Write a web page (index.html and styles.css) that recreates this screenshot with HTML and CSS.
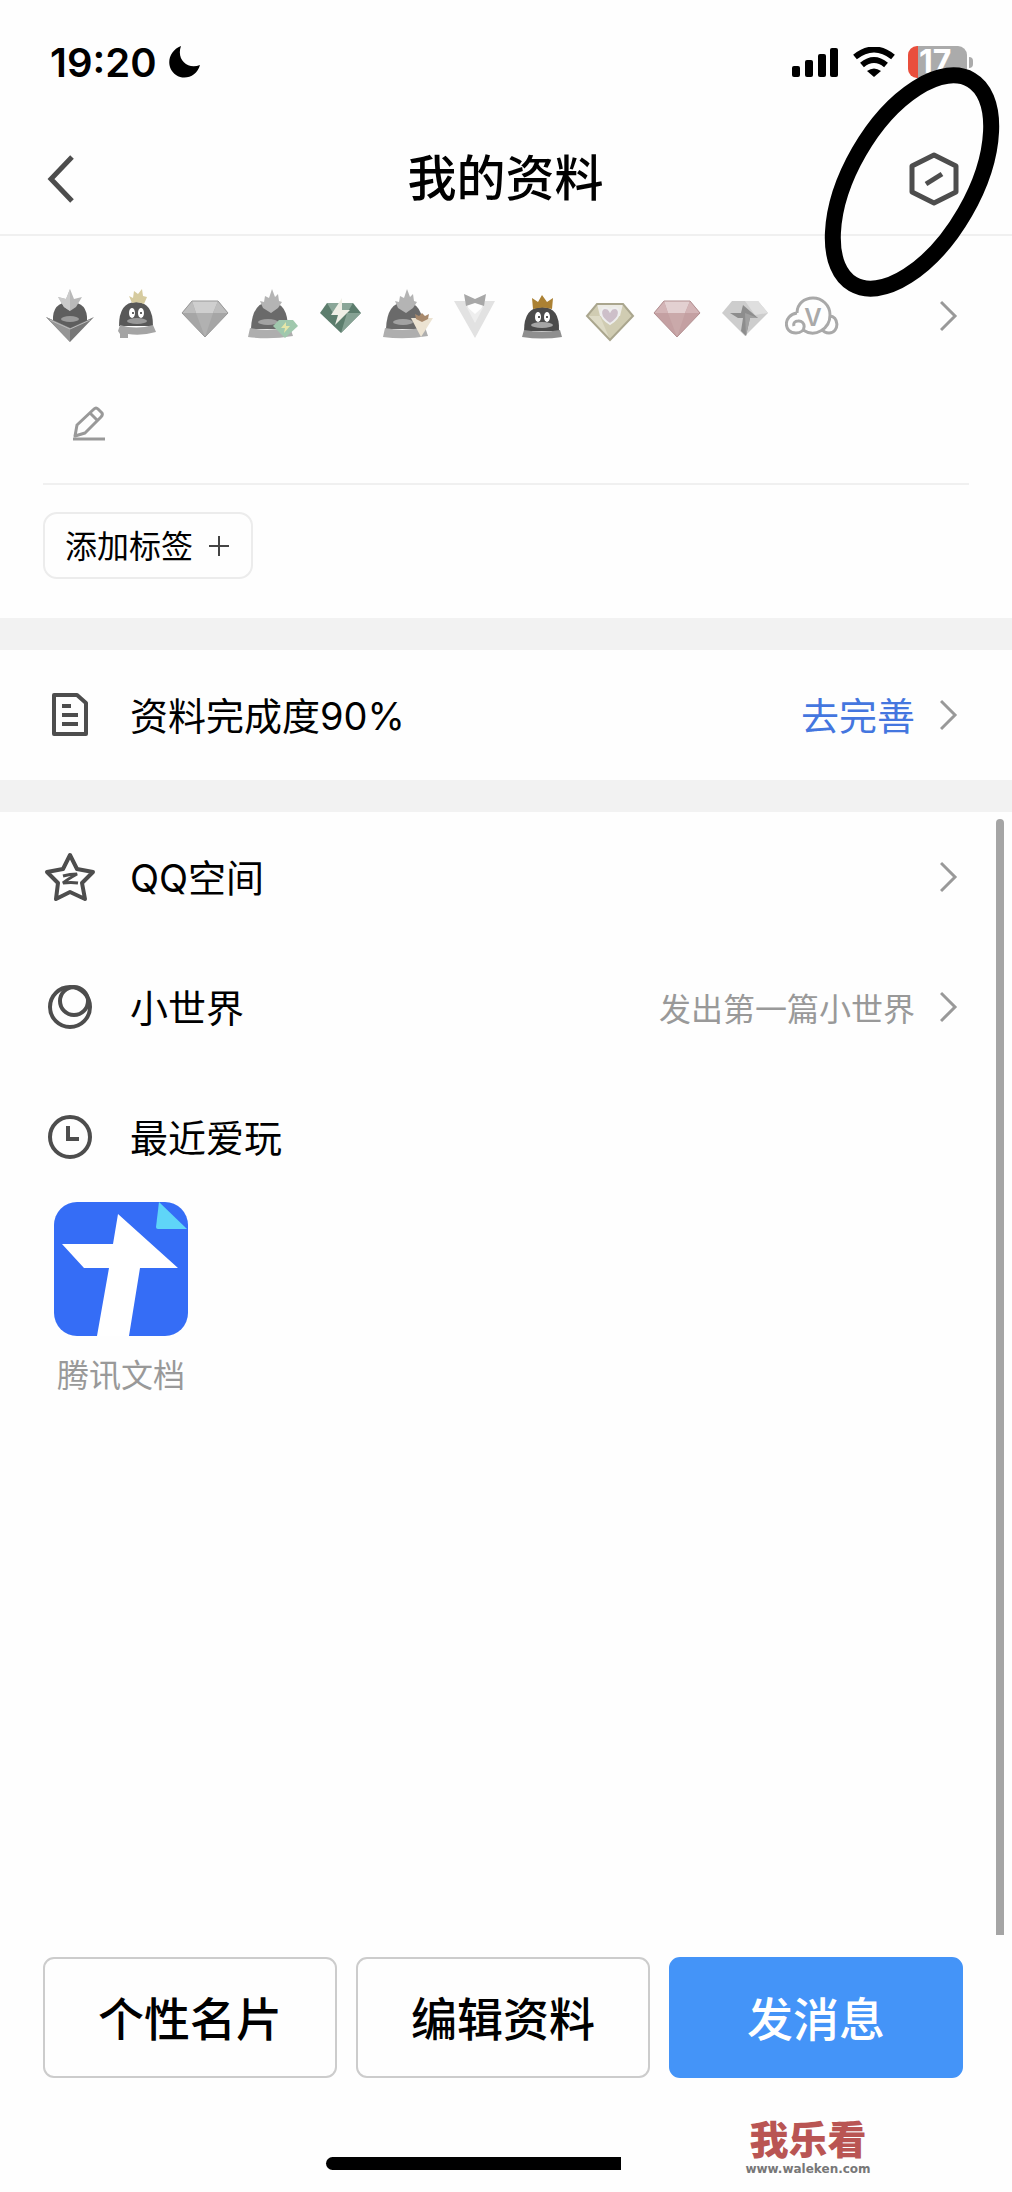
FILE: index.html
```html
<!DOCTYPE html>
<html lang="zh-CN">
<head>
    <meta charset="UTF-8">
    <meta name="viewport" content="width=device-width, initial-scale=1.0">
    <title>我的资料</title>
    <link rel="stylesheet" href="styles.css">
</head>
<body>
<svg class="defs" width="0" height="0" aria-hidden="true">
    <symbol id="arrow" viewBox="0 0 18 32"><path d="M1 2l14 14L1 30" fill="none" stroke="#999" stroke-width="3"/></symbol>
</svg>
<div class="page">
    <header class="header">
        <div class="status">
            <span class="time">19:20</span>
            <svg class="moon" width="32" height="32" viewBox="0 0 32 32"><path d="M12 0C-1 5-4 21 7 29c9 6 21 1 24-10C19 24 7 14 12 0z"/></svg>
            <svg class="signal" width="48" height="30" viewBox="0 0 48 30">
                <rect x="0" y="19" width="8" height="11" rx="2"/>
                <rect x="13" y="13" width="8" height="17" rx="2"/>
                <rect x="26" y="7" width="8" height="23" rx="2"/>
                <rect x="38" y="1" width="8" height="29" rx="2"/>
            </svg>
            <svg class="wifi" width="42" height="30" viewBox="0 0 42 30">
                <path d="M2 10q19-15 38 0M9 18q12-10 24 0" fill="none" stroke="#000" stroke-width="6"/>
                <path d="M14 24q7-5 14 0l-7 6z"/>
            </svg>
            <span class="battery">17</span>
        </div>
        <div class="nav">
            <button class="nav-btn back" type="button" aria-label="返回">
                <svg width="28" height="48" viewBox="0 0 28 48"><path d="M26 2L5 24l21 22" fill="none" stroke="#4d4d4d" stroke-width="5"/></svg>
            </button>
            <h1>我的资料</h1>
            <button class="nav-btn" type="button" aria-label="设置">
                <svg width="50" height="54" viewBox="0 0 50 54" fill="none" stroke="#4d4d4d" stroke-width="5">
                    <path d="M25 3l22 11v26L25 51 3 40V14z" stroke-linejoin="round"/>
                    <path d="M17 32l16-10"/>
                </svg>
            </button>
        </div>
        <svg class="mark" width="176" height="230" viewBox="0 0 176 230">
            <ellipse cx="88" cy="115" rx="61" ry="118" transform="rotate(30 88 115)" fill="none" stroke="#000" stroke-width="16"/>
        </svg>
    </header>

    <section class="info">
        <a class="badges" href="#" aria-label="特权图标">
            <span class="badge-list">
                <svg viewBox="0 0 54 54">
                    <path d="M10 32q-1-19 17-19t17 19l-17 10z" fill="#5e5e5e"/>
                    <ellipse cx="27" cy="30" rx="9" ry="3" fill="#9b9b9b"/>
                    <path d="M27 0l4 10 8-2-6 10-6 4-6-4-6-10 8 2z" fill="#b9b9b9"/>
                    <path d="M27 0v22l-6-4-6-10 8 2z" fill="#cbcbcb"/>
                    <path d="M3 28l24 11 24-11-24 25z" fill="#777"/>
                    <path d="M3 28l24 11v14z" fill="#959595"/>
                    <path d="M7 31l20 9 20-9" fill="none" stroke="#bbb"/>
                </svg>
                <svg viewBox="0 0 54 54">
                    <path d="M9 37q0-24 17-24t17 24z" fill="#585858"/>
                    <path d="M10 36q16 5 33 0l3 7q-14 4-28 2v4h-8v-4l-2-3z" fill="#a4a4a4"/>
                    <ellipse cx="27" cy="32" rx="10" ry="3" fill="#999"/>
                    <ellipse cx="22" cy="24" rx="3" ry="5" fill="#fff"/><ellipse cx="31" cy="24" rx="3" ry="5" fill="#fff"/>
                    <circle cx="23" cy="24" r="1" fill="#333"/><circle cx="31" cy="24" r="1" fill="#333"/>
                    <path d="M22 14l-3-7 4 2 1-7 4 3 4-5 1 7 4 1-3 7q-6-3-12-1z" fill="#d6cb9f"/>
                </svg>
                <svg viewBox="0 0 54 54">
                    <path d="M14 12h26l10 12-23 24L4 24z" fill="#a6a6a6"/>
                    <path d="M14 12h26l-5 12H18z" fill="#cfcfcf"/>
                    <path d="M14 12l4 12H4zM40 12l10 12H35z" fill="#bdbdbd"/>
                    <path d="M18 24h17l-8 24z" fill="#b1b1b1"/>
                    <path d="M14 12h26l10 12-23 24L4 24z" fill="none" stroke="#999"/>
                </svg>
                <svg viewBox="0 0 54 54">
                    <path d="M6 40q1-27 19-27t18 27z" fill="#6a6a6a"/>
                    <path d="M5 39q19 4 40-1l3 9q-23 4-45 1z" fill="#aeaeae"/>
                    <ellipse cx="23" cy="33" rx="10" ry="3" fill="#a2a2a2"/>
                    <path d="M18 19l-3-7 4 1 1-6 4 2 3-9 3 8 3-3 1 7 3 1-4 6-7 5z" fill="#b4b4b4"/>
                    <path d="M34 31h14l5 6-13 12-12-12z" fill="#a0c8ad"/>
                    <path d="M41 33l-5 6h4l-1 5 6-7h-4z" fill="#e5e6a8"/>
                </svg>
                <svg viewBox="0 0 54 54">
                    <path d="M14 14h26l8 10-20 20L7 24z" fill="#5c7d6d"/>
                    <path d="M14 14h26l-6 10H20z" fill="#8aa698"/>
                    <path d="M34 24h14L28 44z" fill="#86a294"/>
                    <path d="M29 9L18 26h7l-3 10 15-15h-8z" fill="#efefe6"/>
                </svg>
                <svg viewBox="0 0 54 54">
                    <path d="M6 40q1-27 19-27t18 27z" fill="#6a6a6a"/>
                    <path d="M5 39q19 4 40-1l3 9q-23 4-45 1z" fill="#aeaeae"/>
                    <ellipse cx="23" cy="33" rx="10" ry="3" fill="#a2a2a2"/>
                    <path d="M18 19l-3-7 4 1 1-6 4 2 3-9 3 8 3-3 1 7 3 1-4 6-7 5z" fill="#b4b4b4"/>
                    <path d="M31 29h22L41 48z" fill="#ece3d2"/>
                    <path d="M36 30l-1-5 4 2 3-3 3 3 4-2-1 5-6 3z" fill="#a8896c"/>
                </svg>
                <svg viewBox="0 0 54 54">
                    <path d="M6 12h11l10 21 10-21h10L27 49z" fill="#e2e2e2"/>
                    <path d="M18 17l9 17 9-17-9 8z" fill="#eee"/>
                    <path d="M16 5l11 5 11-5-2 12-9-3-9 3z" fill="#a8a8a8"/>
                </svg>
                <svg viewBox="0 0 54 54">
                    <path d="M9 42q0-24 18-24t17 24z" fill="#4b4b4b"/>
                    <path d="M9 41q18 3 36 0l2 7q-20 3-40 0z" fill="#8f8f8f"/>
                    <ellipse cx="27" cy="36" rx="11" ry="3" fill="#a5a5a5"/>
                    <ellipse cx="23" cy="28" rx="3" ry="5" fill="#fff"/><ellipse cx="32" cy="28" rx="3" ry="5" fill="#fff"/>
                    <circle cx="24" cy="28" r="1" fill="#222"/><circle cx="32" cy="28" r="1" fill="#222"/>
                    <path d="M18 20l-1-11 6 4 4-7 5 7 6-4-1 11q-9-3-19 0z" fill="#ab8133"/>
                </svg>
                <svg viewBox="0 0 54 54">
                    <path d="M14 15h26l10 12-23 24L4 27z" fill="#d0ccb2"/>
                    <path d="M14 15h26l-3 12H17z" fill="#ecebe5"/>
                    <path d="M17 27l10 24L4 27z" fill="#dedbc6"/>
                    <path d="M14 15h26l10 12-23 24L4 27z" fill="none" stroke="#aaa68e" stroke-width="2"/>
                    <path d="M27 35c-13-8-9-16-5-16 3 0 4 1 5 3 1-2 2-3 5-3 4 0 8 8-5 16z" fill="#cdbfc9" stroke="#eee" stroke-width="2"/>
                </svg>
                <svg viewBox="0 0 54 54">
                    <path d="M14 12h26l10 12-23 24L4 24z" fill="#c4a0a2"/>
                    <path d="M14 12h26l-5 12H18z" fill="#e3d0d1"/>
                    <path d="M14 12l4 12H4zM40 12l10 12H35z" fill="#d3b4b6"/>
                    <path d="M18 24h17l-8 24z" fill="#caa9aa"/>
                    <path d="M14 12h26l10 12-23 24L4 24z" fill="none" stroke="#b39092"/>
                </svg>
                <svg viewBox="0 0 54 54">
                    <path d="M14 12h26l10 12-23 23L4 24z" fill="#cdcdcd"/>
                    <path d="M27 12h13l10 12-13 2z" fill="#dfdfdf"/>
                    <path d="M25 16l15 13h-8l-4 18-5-5 2-13h-5l-8-5h11z" fill="#8d8d8d"/>
                    <path d="M27 24l13 5h-8l-4 18z" fill="#a0a0a0"/>
                </svg>
                <svg viewBox="0 0 54 54" fill="none" stroke="#a9a9a9" stroke-width="3">
                    <path d="M12 24C12 15 19 9 28 9s17 7 17 17c0 14-15 23-27 15M12 24c-14 2-14 20-1 20 11 0 10-13 2-12-3 0-5 2-4 5M44 27c10-1 11 17 0 17-3 0-6-2-7-4"/>
                    <text x="28" y="37" text-anchor="middle" fill="#a9a9a9" stroke="none" class="cloud-v">V</text>
                </svg>
            </span>
            <svg class="arrow"><use href="#arrow"/></svg>
        </a>
        <button class="edit" type="button" aria-label="编辑签名">
            <svg width="34" height="36" viewBox="0 0 34 36" fill="none" stroke="#999" stroke-width="3">
                <path d="M3 31l2-11L22 4q2-2 4 0l4 4q1 2-1 4L13 28z" stroke-linejoin="round"/>
                <path d="M18 8l8 8M1 34h32"/>
            </svg>
        </button>
        <div class="tags">
            <button class="tag" type="button">
                <span>添加标签</span>
                <svg width="20" height="20" viewBox="0 0 20 20"><path d="M10 0v20M0 10h20" stroke="#444" stroke-width="2"/></svg>
            </button>
        </div>
    </section>

    <section class="complete">
        <a class="row" href="#">
            <svg class="row-icon" viewBox="0 0 54 54" fill="none" stroke="#4d4d4d" stroke-width="4">
                <path d="M11 7h23l9 8v31H11z" stroke-linejoin="round"/>
                <path d="M19 18h9M19 27h16M19 36h16"/>
            </svg>
            <span class="row-name">资料完成度90%</span>
            <span class="row-link">去完善</span>
            <svg class="arrow"><use href="#arrow"/></svg>
        </a>
    </section>

    <main class="list">
        <a class="row" href="#">
            <svg class="row-icon" viewBox="0 0 54 54" fill="none" stroke="#4d4d4d" stroke-width="4">
                <path d="M27 5l7 14 16 3-11 11 3 16-15-7-14 7 2-16L4 22l16-3z" stroke-linejoin="round"/>
                <path d="M20 26q7-2 14-2-9 5-14 9 8-1 15 0" stroke-width="3" stroke-linejoin="bevel"/>
            </svg>
            <span class="row-name">QQ空间</span>
            <svg class="arrow"><use href="#arrow"/></svg>
        </a>
        <a class="row" href="#">
            <svg class="row-icon" viewBox="0 0 54 54" fill="none" stroke="#4d4d4d" stroke-width="4">
                <circle cx="27" cy="27" r="20"/>
                <circle cx="31" cy="21" r="14"/>
            </svg>
            <span class="row-name">小世界</span>
            <span class="row-tip">发出第一篇小世界</span>
            <svg class="arrow"><use href="#arrow"/></svg>
        </a>
        <div class="row">
            <svg class="row-icon" viewBox="0 0 54 54" fill="none" stroke="#4d4d4d" stroke-width="4">
                <circle cx="27" cy="27" r="20"/>
                <path d="M25 16v13h11"/>
            </svg>
            <span class="row-name">最近爱玩</span>
        </div>
        <a class="app" href="#">
            <svg width="134" height="134" viewBox="0 0 134 134">
                <rect width="134" height="134" rx="23" fill="#356df6"/>
                <path d="M8 42h51l5-30 60 54H86l-11 68H43l12-68H30z" fill="#fff"/>
                <path d="M105 0l28 27h-29q-2 0-2-2z" fill="#5fd5f8"/>
            </svg>
            <span>腾讯文档</span>
        </a>
        <span class="scrollbar"></span>
    </main>

    <footer class="footer">
        <div class="actions">
            <button class="btn" type="button">个性名片</button>
            <button class="btn" type="button">编辑资料</button>
            <button class="btn primary" type="button">发消息</button>
        </div>
        <div class="bottom">
            <span class="home"></span>
            <div class="logo">
                <strong>我乐看</strong>
                <small>www.waleken.com</small>
            </div>
        </div>
    </footer>
</div>
</body>
</html>
```
FILE: styles.css
```css
* {
    margin: 0;
    padding: 0;
    box-sizing: border-box;
}
body {
    background: #fefefe;
    color: #000;
    font-family: Inter, "Noto Sans CJK SC", sans-serif;
    font-size: 38px;
}
a {
    color: inherit;
    text-decoration: none;
}
button {
    background: none;
    border: 0;
    color: inherit;
    font-family: inherit;
}
svg {
    display: block;
    flex: none;
}
.defs {
    position: absolute;
}
.page {
    display: flex;
    flex-direction: column;
    min-height: 100vh;
}

/* 顶部 */
.header {
    position: relative;
    border-bottom: 2px solid #f0f0f0;
}
.status {
    display: flex;
    align-items: center;
    height: 124px;
    padding: 0 45px 0 50px;
}
.time {
    font-size: 40px;
    font-weight: 600;
}
.moon {
    margin: 0 auto 0 12px;
}
.wifi {
    margin: 0 13px;
}
.battery {
    position: relative;
    width: 59px;
    height: 32px;
    padding-left: 11px;
    border-radius: 9px;
    background: linear-gradient(90deg, #e94f3d 10px, #ababab 10px);
    color: #fff;
    font-size: 32px;
    font-weight: 700;
    line-height: 32px;
}
.battery::after {
    content: "";
    position: absolute;
    top: 11px;
    right: -6px;
    width: 4px;
    height: 11px;
    border-radius: 0 4px 4px 0;
    background: #ababab;
}
.nav {
    display: flex;
    align-items: center;
    justify-content: space-between;
    height: 110px;
    padding: 0 53px 0 46px;
}
.nav-btn {
    width: 50px;
}
.nav .back {
    width: 56px;
}
.nav h1 {
    font-size: 49px;
    font-weight: 500;
    line-height: 60px;
}
.mark {
    position: absolute;
    top: 67px;
    right: 12px;
    overflow: visible;
    pointer-events: none;
}

/* 资料 */
.badges {
    display: flex;
    align-items: center;
    height: 160px;
    padding: 0 54px 0 43px;
}
.badge-list {
    flex: 1;
    display: flex;
    justify-content: space-between;
    margin-right: 101px;
}
.badge-list svg {
    width: 54px;
    height: 54px;
}
.cloud-v {
    font-size: 24px;
    font-weight: 600;
}
.arrow {
    width: 18px;
    height: 32px;
}
.edit {
    display: block;
    margin-left: 72px;
    padding: 9px 0 42px;
}
.tags {
    margin: 0 43px;
    padding: 27px 0 39px;
    border-top: 2px solid #f0f0f0;
}
.tag {
    display: flex;
    align-items: center;
    gap: 16px;
    height: 67px;
    padding: 0 22px 0 20px;
    border: 2px solid #ececec;
    border-radius: 14px;
    font-size: 32px;
}
.tag span,
.row-name,
.row-link {
    padding-bottom: 4px;
}
.complete {
    border: solid #f2f2f2;
    border-width: 32px 0;
}
.row {
    display: flex;
    align-items: center;
    height: 130px;
    padding: 0 54px 0 43px;
}
.row-icon {
    width: 54px;
    height: 54px;
    margin-right: 33px;
}
.row-name {
    flex: 1;
}
.row-link,
.row-tip {
    margin-right: 25px;
}
.row-link {
    color: #4476df;
}
.row-tip {
    color: #999;
    font-size: 32px;
}
.list {
    position: relative;
    flex: 1;
}
.app {
    display: inline-flex;
    flex-direction: column;
    align-items: center;
    gap: 14px;
    margin-left: 54px;
    color: #999;
    font-size: 32px;
}
.scrollbar {
    position: absolute;
    top: 7px;
    right: 8px;
    bottom: 0;
    width: 8px;
    border-radius: 4px 4px 0 0;
    background: #a5a5a5;
}

/* 底部按钮 */
.footer {
    padding: 22px 0 0;
}
.actions {
    display: flex;
    gap: 19px;
    padding: 0 49px 0 43px;
}
.btn {
    flex: 1;
    height: 121px;
    padding-bottom: 4px;
    border: 2px solid #ccc;
    border-radius: 11px;
    font-size: 46px;
    font-weight: 500;
}
.primary {
    border-color: #4494f8;
    background: #4494f8;
    color: #fff;
}
.bottom {
    display: grid;
    grid-template-columns: 326fr 295fr 391fr;
    align-items: end;
    height: 114px;
}
.home {
    grid-column: 2;
    height: 13px;
    margin-bottom: 22px;
    border-radius: 7px 0 0 7px;
    background: #000;
}
.logo {
    justify-self: center;
    margin-right: 17px;
    margin-bottom: 16px;
    text-align: center;
}
.logo strong,
.logo small {
    display: block;
}
.logo strong {
    color: #b95553;
    font-size: 39px;
    font-weight: 900;
    line-height: 44px;
}
.logo small {
    color: #777;
    font-family: "DejaVu Sans", sans-serif;
    font-size: 12px;
    font-weight: 700;
    line-height: 14px;
}
```
